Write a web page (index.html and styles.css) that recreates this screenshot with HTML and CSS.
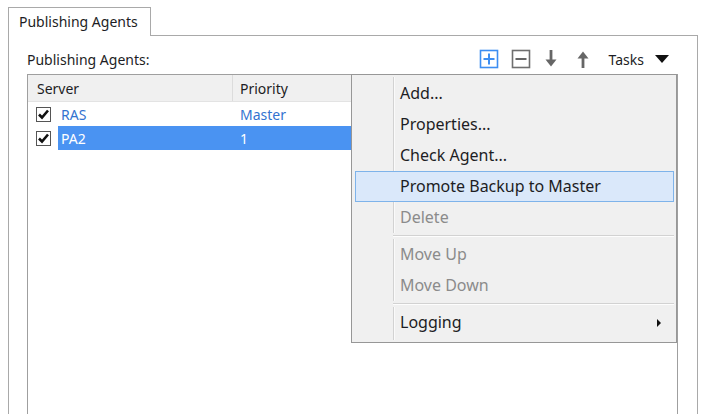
FILE: index.html
```html
<!DOCTYPE html>
<html lang="en">
<head>
    <meta charset="UTF-8">
    <title>Publishing Agents</title>
    <link rel="stylesheet" href="styles.css">
</head>
<body>
<div class="dialog">
    <div class="tabs">
        <div class="tab">Publishing Agents</div>
        <div class="tab-fill"></div>
    </div>
    <div class="panel">
        <div class="toolbar">
            <span class="label">Publishing Agents:</span>
            <div class="tools">
                <svg class="tool plus" width="20" height="20" viewBox="0 0 20 20">
                    <rect x="1.5" y="1.5" width="17" height="17" fill="#fff" stroke="#3d8ef2" stroke-width="1.6"/>
                    <rect x="9" y="4.5" width="2" height="11" fill="#3d8ef2"/>
                    <rect x="4.5" y="9" width="11" height="2" fill="#3d8ef2"/>
                </svg>
                <svg class="tool minus" width="20" height="20" viewBox="0 0 20 20">
                    <rect x="1.5" y="1.5" width="17" height="17" fill="#fff" stroke="#6f6f6f" stroke-width="1.6"/>
                    <rect x="4.5" y="9" width="11" height="2" fill="#666"/>
                </svg>
                <svg class="tool down" width="20" height="20" viewBox="0 0 20 20">
                    <rect x="8.6" y="1" width="2.8" height="11" fill="#666"/>
                    <polygon points="4.5,10.5 15.5,10.5 10,17.5" fill="#666"/>
                </svg>
                <svg class="tool up" width="20" height="20" viewBox="0 0 20 20">
                    <rect x="8.6" y="8" width="2.8" height="11" fill="#666"/>
                    <polygon points="4.5,9.5 15.5,9.5 10,2.5" fill="#666"/>
                </svg>
                <span class="tasks">Tasks</span>
                <svg class="caret" width="14" height="8" viewBox="0 0 14 8">
                    <polygon points="0,0 14,0 7,8" fill="#111"/>
                </svg>
            </div>
        </div>
        <div class="list">
            <div class="list-head">
                <div class="col-server">Server</div>
                <div class="col-priority">Priority</div>
            </div>
            <div class="row">
                <span class="check"><svg width="13" height="13" viewBox="0 0 13 13"><path d="M2 6.5 L5 9.5 L11 2.5" fill="none" stroke="#111" stroke-width="2.6"/></svg></span>
                <div class="cells">
                    <span class="cell-server">RAS</span>
                    <span class="cell-priority">Master</span>
                </div>
            </div>
            <div class="row selected">
                <span class="check"><svg width="13" height="13" viewBox="0 0 13 13"><path d="M2 6.5 L5 9.5 L11 2.5" fill="none" stroke="#111" stroke-width="2.6"/></svg></span>
                <div class="cells">
                    <span class="cell-server">PA2</span>
                    <span class="cell-priority">1</span>
                </div>
            </div>
        </div>
    </div>
    <ul class="menu">
        <li>Add...</li>
        <li>Properties...</li>
        <li>Check Agent...</li>
        <li class="hover">Promote Backup to Master</li>
        <li class="disabled">Delete</li>
        <li class="sep"></li>
        <li class="disabled">Move Up</li>
        <li class="disabled">Move Down</li>
        <li class="sep"></li>
        <li class="sub">Logging</li>
    </ul>
</div>
</body>
</html>
```

FILE: styles.css
```css
* {
    margin: 0;
    padding: 0;
    box-sizing: border-box;
}

ul, li {
    list-style: none;
}

body {
    background: #fff;
    font-family: "Noto Sans", "Open Sans", sans-serif;
    font-size: 14px;
    color: #1d1d24;
    overflow: hidden;
}

.dialog {
    position: relative;
    width: 690px;
    margin: 7px 0 0 8px;
}

/* tab strip */
.tabs {
    display: flex;
    height: 29px;
}

.tab {
    width: 143px;
    height: 29px;
    border: 1px solid #a9a9a9;
    border-bottom: none;
    background: #fff;
    padding-left: 10px;
    line-height: 27px;
}

.tab-fill {
    flex: 1;
    border-bottom: 1px solid #a9a9a9;
}

.panel {
    height: 390px;
    border: 1px solid #a9a9a9;
    border-top: none;
    padding: 0 19px 0 18px;
}

.toolbar {
    display: flex;
    align-items: center;
    justify-content: space-between;
    height: 38px;
    padding-top: 8px;
}

.tools {
    display: flex;
    align-items: center;
    padding-right: 9px;
}

.tool {
    display: block;
}

.minus {
    margin-left: 12px;
}

.down {
    margin-left: 10px;
}

.up {
    margin-left: 12px;
}

.tasks {
    margin-left: 16px;
}

.caret {
    display: block;
    margin-left: 11px;
}

/* list view */
.list {
    height: 360px;
    border: 1px solid #9f9f9f;
    background: #fff;
}

.list-head {
    display: flex;
    height: 27px;
    background: #f0f0f0;
    border-bottom: 1px solid #e3e3e3;
    line-height: 28px;
}

.col-server {
    width: 205px;
    padding-left: 9px;
    border-right: 1px solid #dcdcdc;
}

.col-priority {
    flex: 1;
    padding-left: 7px;
}

.row {
    display: flex;
    align-items: center;
    height: 24px;
}

.check {
    display: flex;
    align-items: center;
    justify-content: center;
    width: 15px;
    height: 15px;
    margin: 1px 7px 0 8px;
    border: 1px solid #555;
    background: #fff;
}

.cells {
    flex: 1;
    display: flex;
    height: 24px;
    line-height: 26px;
    color: #3373d0;
}

.cell-server {
    width: 174px;
    padding-left: 3px;
}

.cell-priority {
    padding-left: 8px;
}

.row.selected .cells {
    background: #4a93f2;
    color: #fff;
}

/* context menu */
.menu {
    position: absolute;
    left: 343px;
    top: 67px;
    width: 326px;
    height: 269px;
    padding: 3px 2px 3px 3px;
    border: 1px solid #979797;
    background: #f0f0f0;
    font-size: 16px;
}

.menu::before {
    content: "";
    position: absolute;
    left: 41px;
    top: 2px;
    bottom: 2px;
    width: 1px;
    background: #d2d2d2;
    border-right: 1px solid #fafafa;
}

.menu li {
    position: relative;
    height: 31px;
    line-height: 29px;
    padding-left: 44px;
    border: 1px solid transparent;
}

.menu li.hover {
    background: #dae8fa;
    border-color: #7eb3ea;
}

.menu li.disabled {
    color: #8b8b8b;
}

.menu li.sep {
    height: 6px;
    padding: 0;
    border: none;
    margin-left: 38px;
    background: linear-gradient(#f0f0f0 2px, #d2d2d2 2px, #d2d2d2 3px, #fdfdfd 3px, #fdfdfd 4px, #f0f0f0 4px);
}

.menu li.sub::after {
    content: "";
    position: absolute;
    right: 12px;
    top: 11px;
    border-left: 4px solid #111;
    border-top: 4px solid transparent;
    border-bottom: 4px solid transparent;
}
```
